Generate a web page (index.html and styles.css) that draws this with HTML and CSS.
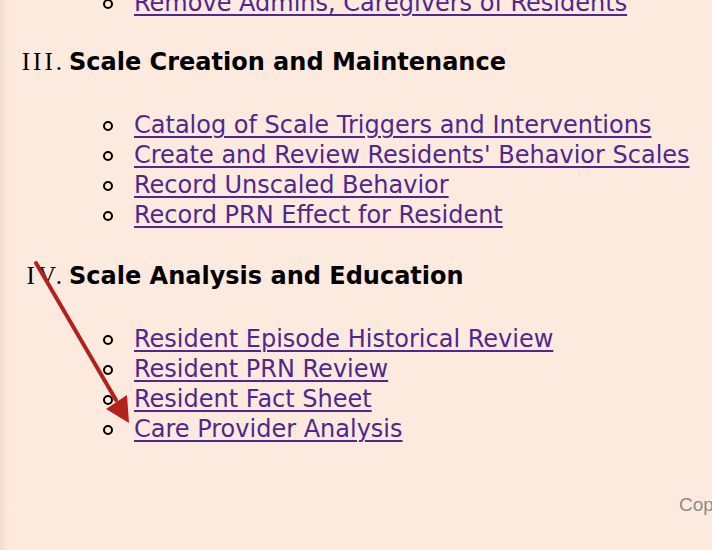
FILE: index.html
```html
<!DOCTYPE html>
<html>
<head>
<meta charset="utf-8">
<link rel="stylesheet" href="styles.css">
</head>
<body>
<div class="page">
  <ol class="sections" start="2">
    <li class="section section-cut">
      <ul class="links">
        <li><a href="#">Remove Admins, Caregivers of Residents</a></li>
      </ul>
    </li>
    <li class="section">
      <div class="section-title">Scale Creation and Maintenance</div>
      <ul class="links">
        <li><a href="#">Catalog of Scale Triggers and Interventions</a></li>
        <li><a href="#">Create and Review Residents' Behavior Scales</a></li>
        <li><a href="#">Record Unscaled Behavior</a></li>
        <li><a href="#">Record PRN Effect for Resident</a></li>
      </ul>
    </li>
    <li class="section">
      <div class="section-title">Scale Analysis and Education</div>
      <ul class="links">
        <li><a href="#">Resident Episode Historical Review</a></li>
        <li><a href="#">Resident PRN Review</a></li>
        <li><a href="#">Resident Fact Sheet</a></li>
        <li><a href="#">Care Provider Analysis</a></li>
      </ul>
    </li>
  </ol>
  <div class="footer">Copyright</div>
  <svg class="arrow" width="712" height="550" viewBox="0 0 712 550">
    <line x1="36" y1="263" x2="116" y2="400" stroke="#b3211b" stroke-width="4" stroke-linecap="round"/>
    <polygon points="129,423 106,409 127,395" fill="#b3211b"/>
  </svg>
</div>
</body>
</html>
```
FILE: styles.css
```css
html, body {
  margin: 0;
  padding: 0;
}
body {
  background: #fdeade;
  width: 712px;
  height: 550px;
  overflow: hidden;
}
.page {
  position: relative;
  display: flow-root;
  height: 550px;
  background: linear-gradient(to right, #f1dcd0 0px, #fae6da 6px, #fdeade 10px);
  font-family: "DejaVu Sans", Verdana, sans-serif;
}
.sections {
  list-style: none;
  counter-reset: sec 1;
  margin: -12px 0 0 0;
  padding: 0 0 0 69px;
}
.section {
  counter-increment: sec;
  margin-bottom: 31px;
}
.section-cut {
  margin-bottom: 29px;
}
.section-title {
  font-weight: bold;
  font-size: 24px;
  line-height: 30px;
  color: #000;
}
.section-title::before {
  content: counter(sec, upper-roman) ".";
  display: inline-block;
  width: 65px;
  margin-left: -69px;
  margin-right: 4px;
  text-align: right;
  font-family: "Liberation Serif", "Times New Roman", serif;
  font-weight: normal;
  font-size: 25px;
  letter-spacing: 3px;
  color: #000;
}
.links {
  list-style: none;
  margin: 33px 0 0 0;
  padding: 0 0 0 65px;
  font-size: 24px;
  line-height: 30px;
}
.section-cut .links {
  margin-top: 0;
}
.links li {
  height: 30px;
}
.links li::before {
  content: "";
  display: inline-block;
  width: 6px;
  height: 6px;
  border: 2px solid #000;
  border-radius: 50%;
  margin-left: -31px;
  margin-right: 21px;
  vertical-align: 2px;
}
.links a {
  color: #4f2790;
  text-decoration: underline;
  text-decoration-thickness: 2px;
  text-underline-offset: 3px;
}
.footer {
  position: absolute;
  left: 679px;
  top: 494px;
  font-family: "Liberation Sans", Arial, sans-serif;
  font-size: 19px;
  color: #8a8a8a;
  white-space: nowrap;
}
.arrow {
  position: absolute;
  left: 0;
  top: 0;
  pointer-events: none;
}
```
